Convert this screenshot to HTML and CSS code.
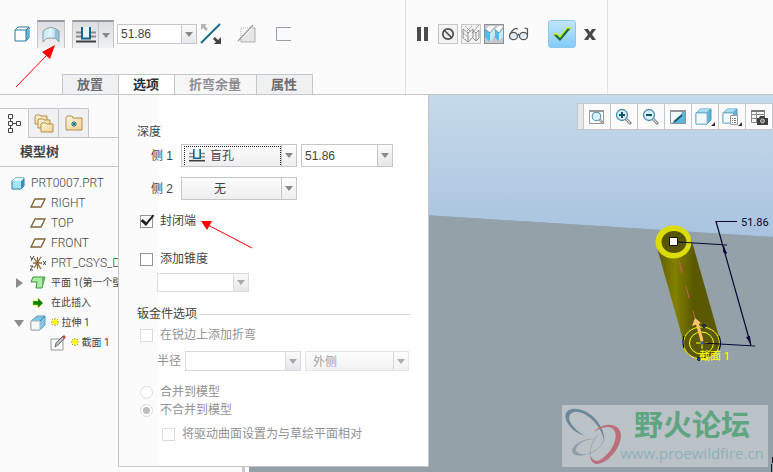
FILE: index.html
```html
<!DOCTYPE html>
<html lang="zh-CN">
<head>
    <meta charset="UTF-8">
    <meta name="viewport" content="width=device-width, initial-scale=1.0">
    <title>PRT0007</title>
    <link rel="stylesheet" href="styles.css">
</head>
<body>
    <!-- shared symbols -->
    <svg class="defs" width="0" height="0" aria-hidden="true">
        <defs>
            <linearGradient id="glass" x1="0" y1="0" x2="1" y2="0">
                <stop offset="0" stop-color="#c2e6f5"/>
                <stop offset="0.5" stop-color="#e2f7fd"/>
                <stop offset="1" stop-color="#7fc3e0"/>
            </linearGradient>
            <linearGradient id="folder" x1="0" y1="0" x2="1" y2="1">
                <stop offset="0" stop-color="#fff6dc"/>
                <stop offset="1" stop-color="#f0d193"/>
            </linearGradient>
            <linearGradient id="body" x1="0" y1="0" x2="1" y2="0">
                <stop offset="0" stop-color="#5c5a00"/>
                <stop offset="0.3" stop-color="#838100"/>
                <stop offset="0.58" stop-color="#5b5900"/>
                <stop offset="1" stop-color="#5b5900"/>
            </linearGradient>
            <linearGradient id="sky" x1="0" y1="0" x2="0" y2="1">
                <stop offset="0" stop-color="#c5daea"/>
                <stop offset="1" stop-color="#a9c3df"/>
            </linearGradient>
        </defs>
        <symbol id="depth" viewBox="0 0 20 16">
            <path d="M0 5.5h5M15 5.5h5M0 9.5h5M15 9.5h5" stroke="#8b8b8b" stroke-width="2"/>
            <path d="M6 0h8v11H6z" fill="#e4f6fc"/>
            <path d="M6 0v11.5h8V0" fill="none" stroke="#11658c" stroke-width="2"/>
            <path d="M0 14.5h20" stroke="#3f3f43" stroke-width="2"/>
        </symbol>
        <symbol id="plane" viewBox="0 0 16 12">
            <path d="M5 2h10l-4 8H1z" fill="none" stroke="#836638" stroke-width="1.4"/>
        </symbol>
        <symbol id="lens" viewBox="0 0 18 18">
            <path d="M11 11l5 5" stroke="#8b8f92" stroke-width="3"/>
            <path d="M11 11l4 4" stroke="#e8eaeb" stroke-width="1"/>
            <circle cx="7" cy="7" r="5.5" fill="#d8f1fa" stroke="#4d8eae" stroke-width="1.3"/>
        </symbol>
        <symbol id="star" viewBox="0 0 8 8">
            <path d="M4 0v8M0 4h8M1 1l6 6M7 1L1 7" stroke="#8d8a20" stroke-width="1"/>
            <path d="M1.500 1.500h5v5h-5z" fill="#ffff00"/>
        </symbol>
    </svg>

    <header class="ribbon">
        <div class="ribbon-left">
            <div class="tools">
                <button class="icon-btn" type="button" aria-label="实体">
                    <svg width="16" height="16" viewBox="0 0 16 16">
                        <path d="M1 4l3-3h11v11l-3 3H1z" fill="#fff" stroke="#277ca2"/>
                        <path d="M12 4l3-3v11l-3 3z" fill="#5eb6da"/>
                        <path d="M1 4h11v11M12 4l3-3" fill="none" stroke="#277ca2"/>
                        <path d="M2 5h9v9H2z" fill="#fbfdfe"/>
                    </svg>
                </button>
                <button class="big-btn pressed" type="button" aria-label="曲面">
                    <svg width="18" height="16" viewBox="0 0 18 16">
                        <path d="M1 4q8-7 16 0v11q-3-5-8-4-5-1-8 4z" fill="url(#glass)" stroke="#8c9ca5"/>
                        <path d="M14 3v9" stroke="#8fa6b3"/>
                    </svg>
                </button>
                <div class="depth-group pressed">
                    <button class="depth-btn" type="button" aria-label="深度">
                        <svg width="20" height="16"><use href="#depth"/></svg>
                    </button>
                    <button class="arrow-btn" type="button" aria-label="深度选项"></button>
                </div>
                <div class="combo combo-value">
                    <input type="text" value="51.86" aria-label="深度值">
                    <button class="arrow-btn" type="button" aria-label="最近使用的值"></button>
                </div>
                <button class="icon-btn flip" type="button" aria-label="反向">
                    <svg width="22" height="22" viewBox="0 0 22 22">
                        <path d="M1 20L20 1" stroke="#176b91" stroke-width="2"/>
                        <path d="M1 1h6L5 3l3 3-2 2-3-3-2 2z" fill="#b5b5b5"/>
                        <path d="M21 21h-7l2-2-3-3 2-2 3 3 3-3z" fill="#444"/>
                    </svg>
                </button>
                <button class="icon-btn remove" type="button" aria-label="移除材料" disabled>
                    <svg width="20" height="20" viewBox="0 0 20 20">
                        <path d="M4 18V16L16 4h2v14z" fill="#e6e6e6"/>
                        <path d="M4 14V4h10" fill="none" stroke="#aaa" stroke-dasharray="1 1"/>
                        <path d="M4 15v3h14V4h-3" fill="none" stroke="#aeaeae"/>
                        <path d="M1 17L16 1" stroke="#999" stroke-width="1.3"/>
                    </svg>
                </button>
                <button class="icon-btn thicken" type="button" aria-label="加厚草绘">
                    <svg width="16" height="16" viewBox="0 0 16 16">
                        <path d="M1 1h15v14H1z" fill="#f8fafd"/>
                        <path d="M16 1.5H1.500v13H16" fill="none" stroke="#9ba0a4"/>
                    </svg>
                </button>
            </div>
            <nav class="tabs">
                <button class="tab" type="button">放置</button>
                <button class="tab active" type="button">选项</button>
                <button class="tab dim" type="button">折弯余量</button>
                <button class="tab" type="button">属性</button>
            </nav>
        </div>
        <div class="ribbon-right">
            <button class="icon-btn pause" type="button" aria-label="暂停">
                <svg width="11" height="14" viewBox="0 0 11 14">
                    <path d="M0 0h4v14H0zM7 0h4v14H7z" fill="#4b4b4d"/>
                </svg>
            </button>
            <button class="small-btn" type="button" aria-label="无预览">
                <svg width="14" height="14" viewBox="0 0 14 14">
                    <circle cx="7" cy="7" r="5.200" fill="none" stroke="#4e4e50" stroke-width="1.700"/>
                    <path d="M3 3l8 8" stroke="#4e4e50" stroke-width="1.700"/>
                </svg>
            </button>
            <button class="small-btn" type="button" aria-label="分离预览">
                <svg width="18" height="18" viewBox="0 0 18 18" fill="none" stroke="#777" stroke-width="0.800">
                    <path d="M1 4l5 4 5-4M6 8v9l-5-4V4M6 17l5-5V4M11 6l3 2 3-3v8l-3 3-3-3M14 8v8"/>
                    <path d="M3 1l5 5M17 0l-7 8M10 1L5 6M1 8l5 4" stroke-dasharray="2 1"/>
                </svg>
            </button>
            <button class="small-btn on" type="button" aria-label="连接预览">
                <svg width="18" height="18" viewBox="0 0 18 18">
                    <path d="M0 4l5-3h5l-5 6zM10 4l4-3h4l-4 6z" fill="#fff"/>
                    <path d="M0 4l5 4v9l-5-5zM9 4l5 4v8l-5-4z" fill="#4fbaf0"/>
                    <path d="M5 8l5-6v9l-5 6zM14 8l4-5v9l-4 4z" fill="#c5ecfc"/>
                    <path d="M0 4l5 4 5-6M9 4l5 4 4-5" stroke="#6b7a83" fill="none" stroke-width="0.600"/>
                </svg>
            </button>
            <button class="icon-btn glasses" type="button" aria-label="预览">
                <svg width="20" height="14" viewBox="0 0 20 14" fill="#e4ebf1" stroke="#555" stroke-width="1.200">
                    <ellipse cx="4.500" cy="9" rx="4" ry="3.700"/>
                    <ellipse cx="14.500" cy="9" rx="4" ry="3.700"/>
                    <path d="M8.500 8q1-1 2 0M1 7q4-7 8-5M18.500 8V2l-3-1" fill="none"/>
                </svg>
            </button>
            <button class="ok-btn" type="button" aria-label="确定">
                <svg width="20" height="16" viewBox="0 0 20 16">
                    <path d="M1 8h4l3 3 7-9h4L8 15z" fill="#176d3a"/>
                    <path d="M1 8h4l3 3 7-9h4" fill="none" stroke="#c6ef1c" stroke-width="1.300"/>
                </svg>
            </button>
            <button class="icon-btn cancel" type="button" aria-label="取消">
                <svg width="12" height="11" viewBox="0 0 12 11">
                    <path d="M0 0h4l2 3 2-3h4L8 5.500 12 11H8L6 8l-2 3H0l4-5.500z" fill="#48484a"/>
                </svg>
            </button>
        </div>
        <svg class="pointer pointer-surface" width="42" height="46" viewBox="0 0 42 46">
            <path d="M2 43L33 11" stroke="#f00"/>
            <path d="M41 1l-5 14-8-7z" fill="#f00"/>
        </svg>
    </header>

    <main class="workspace">
        <aside class="sidebar">
            <div class="side-tabs">
                <button class="side-tab active" type="button" aria-label="模型树">
                    <svg width="14" height="19" viewBox="0 0 14 19" fill="none" stroke="#444">
                        <path d="M1.500.5h4v4h-4zM1.500 7.500h4v4h-4zM1.500 14.500h4v4h-4zM9.500 7.500h4v4h-4zM3.500 5v2M3.500 12v2M6 9.500h3"/>
                    </svg>
                </button>
                <button class="side-tab" type="button" aria-label="文件夹浏览器">
                    <svg width="20" height="19" viewBox="0 0 20 19" fill="url(#folder)" stroke="#b58d4f">
                        <path d="M1 2l1-1h4l1 1h6v8H1z"/>
                        <path d="M4 6l1-1h4l1 1h6v8H4z"/>
                        <path d="M7 10l1-1h4l1 1h6v8H7z"/>
                    </svg>
                </button>
                <button class="side-tab" type="button" aria-label="收藏夹">
                    <svg width="18" height="16" viewBox="0 0 18 16">
                        <path d="M1 3l1-2h5l1 2h9v12H1z" fill="url(#folder)" stroke="#b58d4f"/>
                        <path d="M9 6v6M6 9h6M7 7l4 4M11 7l-4 4" stroke="#166c8c"/>
                    </svg>
                </button>
            </div>
            <h2 class="side-title">模型树</h2>
            <ul class="tree">
                <li class="level-0">
                    <svg width="14" height="13" viewBox="0 0 14 13">
                        <path d="M1 4l3-3h9v8l-3 3H1z" fill="#a5e4fa" stroke="#26759a"/>
                        <path d="M10 4l3-3v8l-3 3z" fill="#3395c1"/>
                        <path d="M1 4l3-3h9l-3 3z" fill="#e0f7fe"/>
                    </svg>
                    <span>PRT0007.PRT</span>
                </li>
                <li><svg width="16" height="12"><use href="#plane"/></svg><span>RIGHT</span></li>
                <li><svg width="16" height="12"><use href="#plane"/></svg><span>TOP</span></li>
                <li><svg width="16" height="12"><use href="#plane"/></svg><span>FRONT</span></li>
                <li>
                    <svg width="16" height="16" viewBox="0 0 16 16" fill="none" stroke="#8f693a" stroke-width="1.300">
                        <path d="M3 8h9M7.500 2v12M4 3l7 11M11 2L4 13"/>
                        <path d="M0 1l2 3M4 1L1 6M0 11h3l-3 4h3M13 6l3 4M16 6l-3 4" stroke="#444" stroke-width="1"/>
                    </svg>
                    <span>PRT_CSYS_DEF</span>
                </li>
                <li class="cjk">
                    <i class="twist closed"></i>
                    <svg width="16" height="14" viewBox="0 0 16 14">
                        <path d="M3 1h12l-3 11H6l1-6H1z" fill="#aee9a5" stroke="#3a9140"/>
                        <path d="M12 1h3l-3 11z" fill="#62b95e"/>
                    </svg>
                    <span>平面 1(第一个壁)</span>
                </li>
                <li class="cjk">
                    <svg width="16" height="12" viewBox="0 0 16 12">
                        <path d="M3 4h5V1l5 5-5 5V8H3z" fill="#008000" stroke="#b5d400" stroke-width="0.600"/>
                    </svg>
                    <span>在此插入</span>
                </li>
                <li class="cjk">
                    <i class="twist open"></i>
                    <svg width="16" height="16" viewBox="0 0 16 16">
                        <path d="M1 6l6-5h8v9l-5 5H1z" fill="#83c5e3" stroke="#5a9fbf"/>
                        <path d="M1 6h9v9H1z" fill="#f5f6f8" stroke="#aeb4bb"/>
                        <path d="M10 6l5-5" stroke="#2d81a7"/>
                    </svg>
                    <span><svg class="mark" width="8" height="8"><use href="#star"/></svg> 拉伸 1</span>
                </li>
                <li class="level-2 cjk">
                    <svg width="16" height="16" viewBox="0 0 16 16">
                        <path d="M1 4h12v11H1z" fill="#fdfdfd" stroke="#8f979d"/>
                        <path d="M5 12l1-4 7-7 2 2-7 7z" fill="#bdbdbd" stroke="#555" stroke-width="0.800"/>
                        <path d="M12 2l2-2 2 2-2 2z" fill="#c54a3c"/>
                    </svg>
                    <span><svg class="mark" width="8" height="8"><use href="#star"/></svg> 截面 1</span>
                </li>
            </ul>
        </aside>
        <div class="splitter"></div>

        <section class="viewport">
            <svg class="scene" viewBox="249 95 524 377" preserveAspectRatio="xMaxYMin slice">
                <path d="M249 95h524v142L249 204z" fill="url(#sky)"/>
                <path d="M249 204l524 33v235H249z" fill="#95a1a9"/>
                <path d="M656 244L691 238 720 340 683 340z" fill="url(#body)"/>
                <ellipse cx="701.500" cy="343" rx="18.500" ry="16" fill="#5b5900"/>
                <ellipse cx="673.500" cy="242" rx="18" ry="16.500" fill="#dcdc08"/>
                <ellipse cx="674" cy="242" rx="12.500" ry="11" fill="#575500"/>
                <path d="M679 261l3 12M686 286l3 12M693 311l5 18" stroke="#c9605a" fill="none"/>
                <g fill="none" stroke="#ff0">
                    <ellipse cx="701.500" cy="343" rx="18" ry="16"/>
                    <ellipse cx="701.500" cy="343" rx="12" ry="11"/>
                    <path d="M696 343h12M702 337v12"/>
                </g>
                <path d="M702 341l-5-19" stroke="#ffc273" stroke-width="3"/>
                <path d="M695 318l6 5-9 3z" fill="#ffc273"/>
                <g fill="none" stroke="#060632" stroke-width="1.200">
                    <path d="M678 242l49 3M702 343l53 3M737 221.500h-21l35 124"/>
                    <path d="M684 336q-2 6 0 12M719 336q3 7 0 14"/>
                </g>
                <path d="M722 244l5 9-2 1zM724 246l3 8-4-2zM751 345l-5-8 4-1z" fill="#060632"/>
                <path d="M669.500 237.500h8v8h-8z" fill="#fff" stroke="#111"/>
                <circle cx="704" cy="326" r="1.500" fill="#2657c7" stroke="#111"/>
                <circle cx="699" cy="359" r="1.500" fill="#2657c7" stroke="#111"/>
                <circle cx="702" cy="343" r="1.500" fill="#2657c7"/>
                <text class="dim-text" x="741" y="226">51.86</text>
                <text class="sketch-text" x="699" y="360">截面 1</text>
                <path d="M772.500 457v6M771.500 464v8" stroke="#1b1b28"/>
            </svg>

            <div class="view-bar">
                <button type="button" aria-label="重新调整">
                    <svg width="18" height="18" viewBox="0 0 18 18">
                        <path d="M1.500 2.500h14v13h-14z" fill="#fbfbfb" stroke="#999"/>
                        <path d="M1 2h15v2H1z" fill="#999"/>
                        <use href="#lens" x="3" y="3" width="14" height="14"/>
                    </svg>
                </button>
                <button type="button" aria-label="放大">
                    <svg width="18" height="18" viewBox="0 0 18 18">
                        <use href="#lens"/>
                        <path d="M4 7h6M7 4v6" stroke="#11526f" stroke-width="2"/>
                    </svg>
                </button>
                <button type="button" aria-label="缩小">
                    <svg width="18" height="18" viewBox="0 0 18 18">
                        <use href="#lens"/>
                        <path d="M4 7h6" stroke="#11526f" stroke-width="2"/>
                    </svg>
                </button>
                <button type="button" aria-label="重画">
                    <svg width="18" height="18" viewBox="0 0 18 18">
                        <path d="M1.500 2.500h15v13h-15z" fill="#5fb5d6" stroke="#8c9297"/>
                        <path d="M2 4h11q-2 8-11 11z" fill="#f3fafc"/>
                        <path d="M5 14L13 7" stroke="#1c5876" stroke-width="2"/>
                        <path d="M1 2h16v2H1z" fill="#909498"/>
                    </svg>
                </button>
                <button type="button" aria-label="显示样式">
                    <svg width="20" height="18" viewBox="0 0 20 18">
                        <path d="M1 5l4-4h11v11l-4 4H1z" fill="#5fb4d6" stroke="#4d99ba"/>
                        <path d="M1 5h11v11H1z" fill="#f3fafd" stroke="#84b6cb"/>
                        <path d="M2 4l3-3h10l-3 3z" fill="#a6dcef"/>
                        <path d="M20 14v4h-4z" fill="#333"/>
                    </svg>
                </button>
                <button type="button" aria-label="视图列表">
                    <svg width="20" height="18" viewBox="0 0 20 18">
                        <path d="M1 5l4-4h10v10l-4 4H1z" fill="#5fb4d6" stroke="#4d99ba"/>
                        <path d="M1 5h10v10H1z" fill="#f3fafd" stroke="#84b6cb"/>
                        <path d="M2 4l3-3h9l-3 3z" fill="#a6dcef"/>
                        <path d="M8.500 7.500h7v9h-7z" fill="#fff" stroke="#999"/>
                        <path d="M10 10.500h1M12 10.500h2M10 12.500h1M12 12.500h2M10 14.500h1M12 14.500h2" stroke="#777"/>
                        <path d="M20 14v4h-4z" fill="#333"/>
                    </svg>
                </button>
                <button type="button" aria-label="视图管理器">
                    <svg width="18" height="18" viewBox="0 0 18 18">
                        <path d="M1.500 2.500h13v12h-13zM2 6.500h12M2 10.500h12M6.500 3v11" fill="#f7f7f7" stroke="#888"/>
                        <path d="M1 2h14v2H1z" fill="#777"/>
                        <path d="M7 10h2l1-2h4l1 2h3v7H7z" fill="#3e3e40"/>
                        <circle cx="12.500" cy="13" r="2" fill="#777" stroke="#ddd" stroke-width="0.800"/>
                    </svg>
                </button>
            </div>

            <div class="watermark">
                <svg width="58" height="58" viewBox="0 0 58 58">
                    <path d="M21 29C4 24-6 5 8 2 24 0 42 18 40 35 39 20 22 3 10 5 0 8 6 20 21 29z" fill="#6b8798"/>
                    <path d="M30 25C40 14 56 16 57 28 57 42 42 58 32 57 28 56 26 52 26 48 29 54 32 55 36 53 46 47 54 34 51 25 48 17 38 20 30 25z" fill="#bb6f7a"/>
                    <path d="M31 32C20 30 8 38 8 44 8 49 17 50 24 47 18 48 11 46 12 42 14 36 22 32 31 32z" fill="#8f9faa"/>
                    <path d="M24 47q12-4 16-14M26 48q0-12 8-20" fill="none" stroke="#9aa7b0"/>
                </svg>
                <div class="watermark-text">
                    <strong>野火论坛</strong>
                    <span>www.proewildfire.cn</span>
                </div>
            </div>
        </section>

        <form class="options">
            <div class="row">深度</div>
            <div class="row side-row">
                <label for="side1">侧 1</label>
                <div class="icon-select">
                    <select id="side1" class="select focused"><option>盲孔</option></select>
                    <svg width="16" height="13" viewBox="0 0 20 16"><use href="#depth"/></svg>
                </div>
                <div class="combo">
                    <input type="text" value="51.86" aria-label="侧 1 深度">
                    <button class="arrow-btn" type="button" aria-label="最近使用的值"></button>
                </div>
            </div>
            <div class="row side-row second">
                <label for="side2">侧 2</label>
                <select id="side2" class="select none"><option>无</option></select>
            </div>
            <div class="row check-row capped">
                <input type="checkbox" id="cap" checked>
                <label for="cap">封闭端</label>
            </div>
            <div class="row check-row taper">
                <input type="checkbox" id="taper">
                <label for="taper">添加锥度</label>
            </div>
            <div class="combo muted taper-value">
                <input type="text" value="" aria-label="锥度" disabled>
                <button class="arrow-btn" type="button" aria-label="锥度值" disabled></button>
            </div>
            <div class="row group-title">钣金件选项</div>
            <div class="row check-row muted">
                <input type="checkbox" id="bend" disabled>
                <label for="bend">在锐边上添加折弯</label>
            </div>
            <div class="row radius-row muted">
                <label for="radius">半径</label>
                <div class="combo">
                    <input type="text" id="radius" value="" disabled>
                    <button class="arrow-btn" type="button" aria-label="半径值" disabled></button>
                </div>
                <select class="select" aria-label="半径侧" disabled><option>外侧</option></select>
            </div>
            <div class="radios">
                <div class="row check-row muted">
                    <input type="radio" name="merge" id="merge" disabled>
                    <label for="merge">合并到模型</label>
                </div>
                <div class="row check-row muted">
                    <input type="radio" name="merge" id="nomerge" checked disabled>
                    <label for="nomerge">不合并到模型</label>
                </div>
            </div>
            <div class="row check-row muted nested">
                <input type="checkbox" id="drive" disabled>
                <label for="drive">将驱动曲面设置为与草绘平面相对</label>
            </div>
            <svg class="pointer pointer-cap" width="54" height="30" viewBox="0 0 54 30">
                <path d="M8 5l44 23" stroke="#f00"/>
                <path d="M1 1h11l-5 9z" fill="#f00"/>
            </svg>
        </form>
    </main>
</body>
</html>
```

FILE: styles.css
```css
* {
    box-sizing: border-box;
}
body {
    margin: 0;
    min-height: 100vh;
    display: flex;
    flex-direction: column;
    background: #fbfbfb;
    color: #444;
    font-family: "Liberation Sans", "Noto Sans CJK SC", sans-serif;
    font-size: 12px;
    line-height: 20px;
}
button, input, select {
    font: inherit;
    color: inherit;
    margin: 0;
    padding: 0;
}
button {
    display: flex;
    align-items: center;
    justify-content: center;
    border: 0;
    background: none;
}
svg {
    display: block;
    flex: none;
}
.defs {
    position: absolute;
}

/* ribbon */
.ribbon {
    position: relative;
    display: flex;
    border-bottom: 1px solid #c3c6ca;
}
.ribbon-left {
    width: 406px;
    border-right: 1px solid #dfe1e3;
}
.tools {
    display: flex;
    align-items: center;
    height: 74px;
    padding: 0 0 6px 14px;
}
.big-btn {
    width: 28px;
    height: 28px;
    margin: 0 7px;
}
.pressed {
    background: linear-gradient(#dcdde0, #f0f1f3);
    border: 1px solid #c3c6ca;
    border-top: 2px solid #95989b;
    border-bottom: 0;
}
.depth-group {
    display: flex;
    width: 42px;
    height: 28px;
    margin-right: 3px;
}
.depth-btn {
    flex: 1;
}
.arrow-btn {
    width: 15px;
    border-left: 1px solid #c3c6ca;
    background: linear-gradient(#fafafa, #e6e7ea);
}
.arrow-btn::after {
    content: "";
    border: 4px solid transparent;
    border-top: 5px solid #88898b;
    border-bottom: 0;
}
.depth-group .arrow-btn {
    background: none;
}
.combo {
    display: flex;
    border: 1px solid #c3c6ca;
    background: #fff;
}
.combo input {
    flex: 1;
    min-width: 0;
    padding: 0 3px;
    border: 0;
    background: #fff;
}
.combo-value {
    width: 80px;
    height: 20px;
}
.flip {
    margin: 0 15px 0 3px;
}
.remove {
    margin-right: 18px;
}
.tabs {
    display: flex;
    height: 20px;
    padding-left: 62px;
}
.tab {
    padding: 0 15px 0 14px;
    border: 1px solid #c3c6ca;
    border-bottom: 0;
    border-right: 0;
    background: #eff0f2;
    color: #6b6b70;
    font-size: 13px;
    font-weight: bold;
}
.tab:last-child {
    border-right: 1px solid #c3c6ca;
}
.tab.active {
    background: #fff;
    color: #2d2d30;
}
.tab.dim {
    background: #f6f6f6;
    color: #8d8d91;
}
.ribbon-right {
    display: flex;
    align-items: center;
    width: 202px;
    padding: 0 0 26px 11px;
    border-right: 1px solid #e3e4e6;
}
.pause {
    margin-right: 10px;
}
.small-btn {
    width: 20px;
    height: 20px;
    margin-right: 3px;
    border: 1px solid #c6c6c6;
    background: #f3f3f3;
}
.small-btn.on {
    border-color: #8d9092;
    background: #c5c7ca;
}
.glasses {
    margin: 0 19px 0 2px;
}
.ok-btn {
    width: 28px;
    height: 28px;
    margin-right: 8px;
    border: 1px solid #8cc7ec;
    border-radius: 3px;
    background: linear-gradient(#c3e5fb, #83cbf8);
}
.pointer {
    position: absolute;
    pointer-events: none;
}
.pointer-surface {
    left: 14px;
    top: 44px;
}

/* model tree */
.workspace {
    position: relative;
    flex: 1;
    display: flex;
}
.sidebar {
    width: 242px;
    padding-top: 13px;
    overflow: hidden;
}
.side-tabs {
    display: flex;
    height: 30px;
    border-bottom: 1px solid #c3c6ca;
}
.side-tab {
    width: 30px;
    border: 1px solid #c3c6ca;
    border-left: 0;
    border-bottom: 0;
    border-radius: 0 2px 0 0;
    background: #eff0f2;
}
.side-tab.active {
    height: 30px;
    width: 29px;
    background: #fbfbfb;
}
.side-title {
    margin: 0;
    padding: 4px 20px;
    border-bottom: 1px solid #c3c6ca;
    font-size: 13px;
    line-height: 20px;
}
.tree {
    margin: 0;
    padding: 6px 0;
    list-style: none;
    font-family: Roboto, "Noto Sans CJK SC", sans-serif;
}
.tree li {
    position: relative;
    display: flex;
    align-items: center;
    gap: 5px;
    height: 20px;
    padding-left: 30px;
    font-weight: 300;
    white-space: nowrap;
}
.tree .level-0 {
    padding-left: 11px;
    gap: 6px;
}
.tree .level-2 {
    padding-left: 50px;
}
.tree .cjk {
    font-size: 10px;
    font-weight: 400;
}
.mark {
    display: inline-block;
}
.twist {
    position: absolute;
    border: 5px solid transparent;
}
.twist.closed {
    left: 16px;
    border-left: 7px solid #8c8c8e;
    border-right: 0;
}
.twist.open {
    left: 14px;
    border-top: 7px solid #8c8c8e;
    border-bottom: 0;
}
.splitter {
    width: 7px;
    border-left: 3px solid #c9cbce;
    background: #fbfbfb;
}

/* graphics area */
.viewport {
    position: relative;
    flex: 1;
    overflow: hidden;
    background: #95a1a9;
}
.scene {
    position: absolute;
    width: 100%;
    height: 100%;
}
.dim-text {
    font: 11px Roboto, sans-serif;
    fill: #060632;
}
.sketch-text {
    font: 11px Roboto, "Noto Sans CJK SC", sans-serif;
    fill: #ff0;
}
.view-bar {
    position: absolute;
    top: 8px;
    right: 0;
    display: flex;
    height: 27px;
    padding-left: 5px;
    border: 1px solid #c3c6ca;
    background: #e6e8eb;
}
.view-bar button {
    width: 27px;
    border-left: 1px solid #c3c6ca;
    background: #fbfbfb;
}
.watermark {
    position: absolute;
    right: 5px;
    bottom: 5px;
    display: flex;
    align-items: center;
    width: 206px;
    height: 62px;
    padding-left: 2px;
    background: #bac2c8;
}
.watermark-text {
    display: flex;
    flex-direction: column;
    align-items: center;
    width: 140px;
}
.watermark-text strong {
    color: #5fa582;
    font-size: 29px;
    line-height: 34px;
}
.watermark-text span {
    color: #8db1b6;
    font-family: "Open Sans", sans-serif;
    font-size: 15px;
}

/* options panel, opens over the tree and the graphics area */
.options {
    position: absolute;
    left: 118px;
    top: 0;
    width: 311px;
    padding: 27px 17px 22px 18px;
    border: 1px solid #c3c6ca;
    border-top: 0;
    background: linear-gradient(to right, #fbfbfb 39px, #fff 39px);
}
.row {
    display: flex;
    align-items: center;
    min-height: 20px;
}
.side-row {
    gap: 4px;
    margin-top: 2px;
    padding-left: 14px;
}
.side-row label {
    width: 26px;
}
.side-row .combo {
    width: 92px;
    height: 23px;
}
.side-row.second {
    margin-top: 10px;
}
.select {
    appearance: none;
    width: 116px;
    height: 23px;
    border: 1px solid #c3c6ca;
    border-radius: 0;
    outline: 0;
    background:
        url("data:image/svg+xml,%3Csvg xmlns='http://www.w3.org/2000/svg' width='8' height='5'%3E%3Cpath d='M0 0h8L4 5z' fill='%2388898b'/%3E%3C/svg%3E") no-repeat right 3px center,
        linear-gradient(#c3c6ca, #c3c6ca) no-repeat right 14px center / 1px 100%,
        linear-gradient(#fdfdfd, #eeeeef);
}
.select.none {
    padding-left: 32px;
}
.icon-select {
    display: grid;
    align-items: center;
}
.icon-select > * {
    grid-area: 1 / 1;
}
.icon-select svg {
    margin-left: 8px;
    pointer-events: none;
}
.icon-select .select {
    padding-left: 28px;
}
/* dotted focus box drawn inside the select */
.icon-select::after {
    content: "";
    grid-area: 1 / 1;
    align-self: stretch;
    margin: 2px 16px 2px 3px;
    border: 1px dotted #222;
    border-bottom: 0;
    pointer-events: none;
}
.check-row {
    gap: 7px;
    padding-left: 3px;
}
.check-row input {
    appearance: none;
    display: grid;
    place-content: center;
    width: 13px;
    height: 13px;
    border: 1px solid #929599;
    background: #fff;
}
.check-row input[type="checkbox"]:checked::after {
    content: "";
    width: 5px;
    height: 10px;
    margin: -5px 0 0 2px;
    border: solid #222;
    border-width: 0 2px 3px 0;
    transform: rotate(40deg);
}
.check-row input[type="radio"] {
    border-radius: 50%;
}
.check-row input[type="radio"]:checked::after {
    content: "";
    width: 7px;
    height: 7px;
    border-radius: 50%;
    background: #bdbdbd;
}
.capped {
    margin-top: 11px;
}
.taper {
    margin-top: 18px;
}
.taper-value {
    width: 92px;
    height: 19px;
    margin: 4px 0 12px 20px;
}
.group-title {
    gap: 3px;
    margin-bottom: 1px;
}
.group-title::after {
    content: "";
    flex: 1;
    height: 1px;
    background: #d6d8da;
}
.muted {
    color: #929292;
}
.muted input, .muted .select, .combo.muted, .muted .combo {
    border-color: #d8dadd;
    opacity: 1;
    color: #929292;
}
.muted .arrow-btn {
    border-color: #d8dadd;
}
.muted .arrow-btn::after {
    border-top-color: #aaa;
}
.radius-row {
    gap: 4px;
    margin: 6px 0 12px;
    padding-left: 20px;
}
.radius-row .combo {
    width: 116px;
    height: 20px;
}
.radius-row .select {
    width: 104px;
    height: 20px;
    padding-left: 7px;
    color: #777;
    opacity: 0.7;
}
.radios {
    line-height: 18px;
}
.radios .row {
    min-height: 18px;
}
.nested {
    margin-top: 5px;
    padding-left: 25px;
}
.pointer-cap {
    left: 81px;
    top: 125px;
}
```
